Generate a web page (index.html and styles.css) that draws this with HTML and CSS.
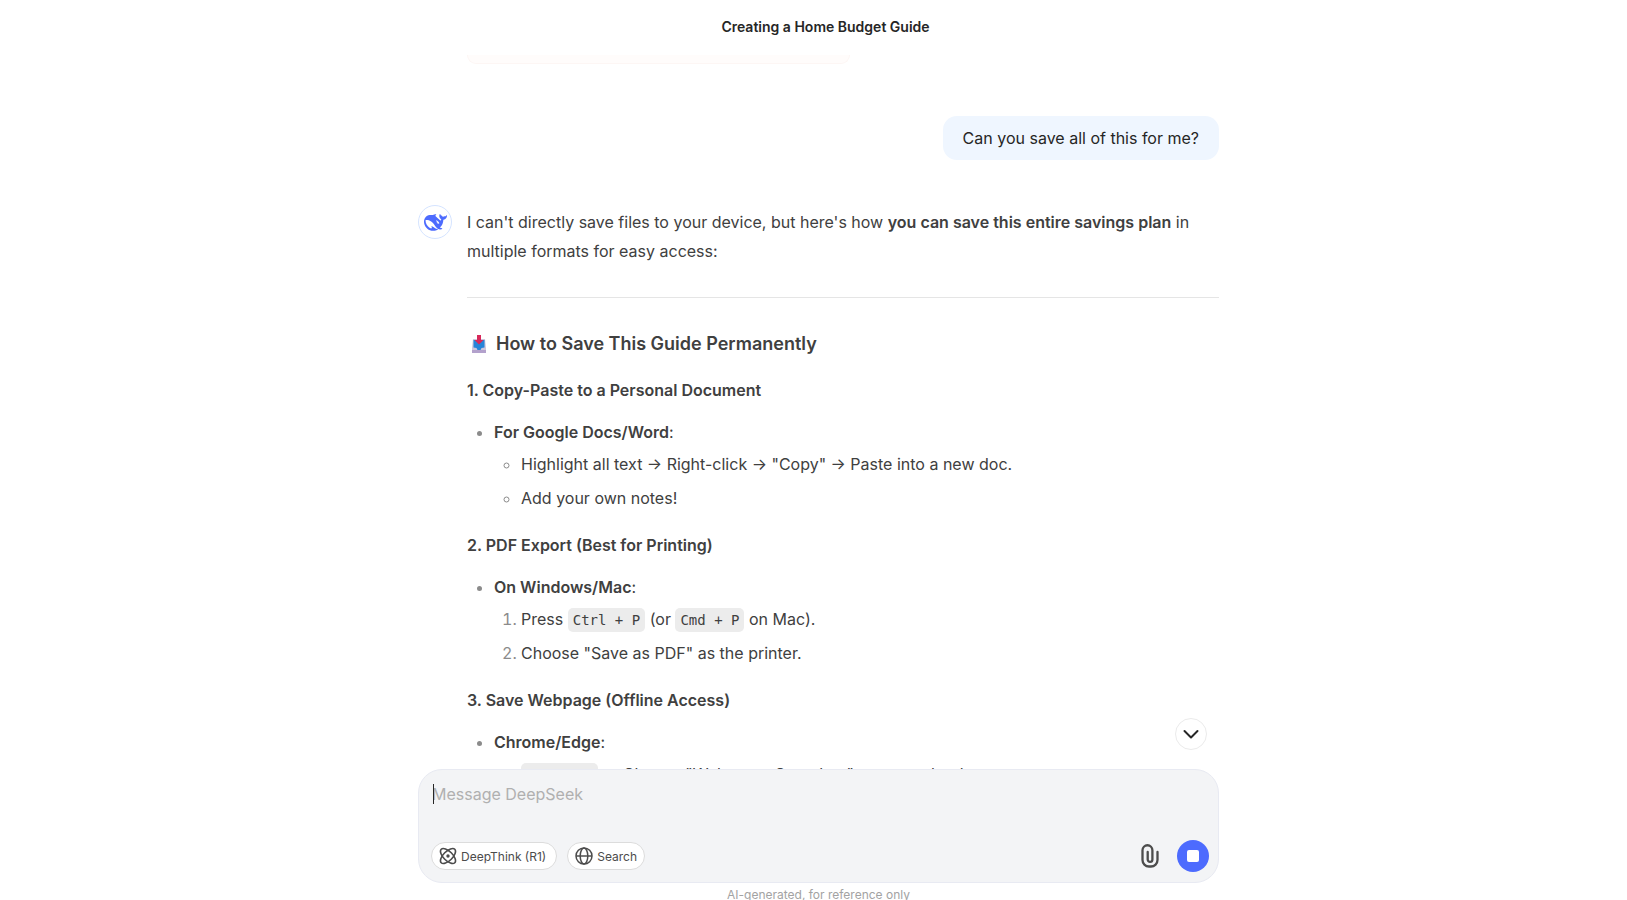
FILE: index.html
```html
<!DOCTYPE html>
<html lang="en">
<head>
  <meta charset="UTF-8" />
  <title>Creating a Home Budget Guide</title>
  <meta name="viewport" content="width=device-width, initial-scale=1.0" />
  <link rel="stylesheet" href="styles.css">
</head>
<body>
  <header class="header">
    <h1>Creating a Home Budget Guide</h1>
  </header>

  <main class="chat">
    <div class="messages">
      <div class="notice"></div>

      <div class="user-row">
        <div class="bubble">Can you save all of this for me?</div>
      </div>

      <div class="reply">
        <div class="avatar">
          <svg viewBox="0 0 24 24" width="23" height="23" fill="#4d6bfe" aria-hidden="true"><path d="M23.748 4.482c-.254-.124-.364.113-.512.234-.051.039-.094.09-.137.136-.372.397-.806.657-1.373.626-.829-.046-1.537.214-2.163.848-.133-.782-.575-1.248-1.247-1.548-.352-.156-.708-.311-.955-.65-.172-.241-.219-.51-.305-.774-.055-.16-.11-.323-.293-.35-.2-.031-.278.136-.356.276-.313.572-.434 1.202-.422 1.84.027 1.436.633 2.58 1.838 3.393.137.093.172.187.129.323-.082.28-.18.552-.266.833-.055.179-.137.217-.329.14a5.526 5.526 0 01-1.736-1.18c-.857-.828-1.631-1.742-2.597-2.458a11.365 11.365 0 00-.689-.471c-.985-.957.13-1.743.388-1.836.27-.098.093-.432-.779-.428-.872.004-1.67.295-2.687.684a3.055 3.055 0 01-.465.137 9.597 9.597 0 00-2.883-.102c-1.885.21-3.39 1.102-4.497 2.623C.082 8.606-.231 10.684.152 12.85c.403 2.284 1.569 4.175 3.36 5.653 1.858 1.533 3.997 2.284 6.438 2.14 1.482-.085 3.133-.284 4.994-1.86.47.234.962.327 1.78.397.63.059 1.236-.03 1.705-.128.735-.156.684-.837.419-.961-2.155-1.004-1.682-.595-2.113-.926 1.096-1.296 2.746-2.642 3.392-7.003.05-.347.007-.565 0-.845-.004-.17.035-.237.23-.256a4.173 4.173 0 001.545-.475c1.396-.763 1.96-2.015 2.093-3.517.02-.23-.004-.467-.247-.588zM11.581 18c-2.089-1.642-3.102-2.183-3.52-2.16-.392.024-.321.471-.235.763.09.288.207.486.371.739.114.167.192.416-.113.603-.673.416-1.842-.14-1.897-.167-1.361-.802-2.5-1.86-3.301-3.307-.774-1.393-1.224-2.887-1.298-4.482-.02-.386.093-.522.477-.592a4.696 4.696 0 011.529-.039c2.132.312 3.946 1.265 5.468 2.774.868.86 1.525 1.887 2.202 2.891.72 1.066 1.494 2.082 2.48 2.914.348.292.625.514.891.677-.802.09-2.14.11-3.054-.614zm1-6.44a.306.306 0 01.415-.287.302.302 0 01.2.288.306.306 0 01-.31.307.303.303 0 01-.304-.308zm3.11 1.596c-.2.081-.399.151-.59.16a1.245 1.245 0 01-.798-.254c-.274-.23-.47-.358-.552-.758a1.73 1.73 0 01.016-.588c.07-.327-.008-.537-.239-.727-.187-.156-.426-.199-.688-.199a.559.559 0 01-.254-.078c-.11-.054-.2-.19-.114-.358.028-.054.16-.186.192-.21.356-.202.767-.136 1.146.016.352.144.618.408 1.001.782.391.451.462.576.685.914.176.265.336.537.445.848.067.195-.019.354-.25.452z"/></svg>
        </div>
        <div class="markdown">
          <p>I can't directly save files to your device, but here's how <strong>you can save this entire savings plan</strong> in multiple formats for easy access:</p>
          <hr>
          <h3>
            <svg class="inbox" viewBox="0 0 16 18" width="16" height="18" aria-hidden="true">
              <path d="M2 4h12l1 9v5H1v-5z" fill="#cdc6dc"/>
              <path d="M1 15h14v3H1z" fill="#b3a1cc"/>
              <path d="M2.500 5h11v7.500l-3 .5-1 2h-3l-1-2-3-.5z" fill="#2684d8"/>
              <path d="M6 0h4v5h2.500L8 9.500 3.500 5H6z" fill="#d8285a"/>
            </svg>
            How to Save This Guide Permanently
          </h3>
          <h4>1. Copy-Paste to a Personal Document</h4>
          <ul>
            <li><strong>For Google Docs/Word</strong>:
              <ul>
                <li>Highlight all text → Right-click → "Copy" → Paste into a new doc.</li>
                <li>Add your own notes!</li>
              </ul>
            </li>
          </ul>
          <h4>2. PDF Export (Best for Printing)</h4>
          <ul>
            <li><strong>On Windows/Mac</strong>:
              <ol>
                <li>Press <code>Ctrl + P</code> (or <code>Cmd + P</code> on Mac).</li>
                <li>Choose "Save as PDF" as the printer.</li>
              </ol>
            </li>
          </ul>
          <h4>3. Save Webpage (Offline Access)</h4>
          <ul>
            <li><strong>Chrome/Edge</strong>:
              <ul>
                <li><code>Ctrl + S</code> → Choose "Webpage, Complete" → saves .html</li>
              </ul>
            </li>
          </ul>
        </div>
      </div>
    </div>
    <button class="scroll-down" type="button" aria-label="Scroll to bottom">
      <svg viewBox="0 0 16 16" width="16" height="16" fill="none" stroke="#262626" stroke-width="2" stroke-linecap="round" stroke-linejoin="round"><path d="M1.500 5 8 11.500 14.500 5"/></svg>
    </button>
  </main>

  <footer class="footer">
    <form class="composer">
      <div class="input-wrap">
        <textarea id="message" rows="2" placeholder="Message DeepSeek" aria-label="Message DeepSeek"></textarea>
        <span class="caret"></span>
      </div>
      <div class="toolbar">
        <button class="chip" type="button">
          <svg viewBox="0 0 18 18" width="18" height="18" fill="none" stroke="#4c4c4c" stroke-width="1.600">
            <ellipse cx="9" cy="9" rx="9.600" ry="4.600" transform="rotate(45 9 9)"/>
            <ellipse cx="9" cy="9" rx="9.600" ry="4.600" transform="rotate(-45 9 9)"/>
            <circle cx="9" cy="9" r="1.700" fill="#4c4c4c" stroke="none"/>
          </svg>
          DeepThink (R1)
        </button>
        <button class="chip" type="button">
          <svg viewBox="0 0 18 18" width="18" height="18" fill="none" stroke="#4c4c4c" stroke-width="1.500">
            <circle cx="9" cy="9" r="8"/>
            <ellipse cx="9" cy="9" rx="3.800" ry="8"/>
            <path d="M1 9h16"/>
          </svg>
          Search
        </button>
        <button class="attach" type="button" aria-label="Attach file">
          <svg viewBox="0 0 18 24" width="18" height="24" fill="none" stroke="#4c4c4c" stroke-width="2.300" stroke-linecap="round"><path d="M16.500 8v8a6.500 6.500 0 0 1-6.500 6.500H8A6.500 6.500 0 0 1 1.500 16V6.200a4.900 4.900 0 0 1 9.900 0v9.300a2.300 2.300 0 0 1-4.700 0V8"/></svg>
        </button>
        <button class="stop" type="button" aria-label="Stop"><span></span></button>
      </div>
    </form>
    <p class="disclaimer">AI-generated, for reference only</p>
  </footer>
</body>
</html>
```
FILE: styles.css
```css
* {
  box-sizing: border-box;
}
body {
  font-family: Inter, sans-serif;
  font-size: 16px;
  line-height: 29px;
  color: #404040;
  background: #fff;
  margin: 0;
  height: 100vh;
  display: flex;
  flex-direction: column;
  overflow: hidden;
}
button {
  font: inherit;
  border: none;
  padding: 0;
  cursor: pointer;
  display: flex;
  align-items: center;
  justify-content: center;
}
svg {
  display: block;
  flex: none;
  overflow: visible;
}
.header {
  flex: none;
  height: 55px;
  padding: 0 0 2px 24px;
  display: flex;
  align-items: center;
  justify-content: center;
}
.header h1 {
  margin: 0;
  font-size: 14px;
  font-weight: 600;
  color: #262626;
}

/* messages */
.chat {
  flex: 1;
  min-height: 0;
  position: relative;
  width: 100%;
  max-width: 811px;
  margin: 0 auto;
  padding-left: 10px;
}
.messages {
  height: 100%;
  overflow: hidden;
}
.notice {
  height: 9px;
  width: 383px;
  margin-left: 49px;
  background: #fffcfb;
  border: 1px solid #fdf6f4;
  border-top: none;
  border-radius: 0 0 12px 12px;
}
.user-row {
  display: flex;
  justify-content: flex-end;
  margin: 52px 0 44px;
}
.bubble {
  background: #eff6ff;
  color: #262626;
  border-radius: 14px;
  padding: 8px 20px;
  line-height: 28px;
}
.reply {
  display: flex;
  gap: 15px;
}
.avatar {
  flex: none;
  width: 34px;
  height: 34px;
  margin-top: 1px;
  border: 1px solid #d5e4ff;
  border-radius: 50%;
  display: flex;
  align-items: center;
  justify-content: center;
}
.markdown {
  flex: 1;
  padding-top: 4px;
}
.markdown p {
  margin: 0;
}
.markdown hr {
  border: none;
  border-top: 1px solid #e5e5e5;
  margin: 31px 0 32px;
}
.markdown strong {
  font-weight: 600;
}
.markdown h3 {
  display: flex;
  align-items: center;
  gap: 9px;
  margin: 0 0 20px;
  padding-left: 4px;
  font-size: 18px;
  font-weight: 600;
  line-height: 28px;
}
.markdown h4 {
  margin: 20px 0 16px;
  font-size: 16px;
  font-weight: 600;
  line-height: 24px;
}
.markdown ul,
.markdown ol {
  margin: 0;
  padding-left: 27px;
}
.markdown li > ul,
.markdown li > ol {
  margin-top: 3px;
}
.markdown li + li {
  margin-top: 5px;
}
.markdown li::marker {
  color: #8b8b8b;
}
.markdown code {
  font-family: "DejaVu Sans Mono", monospace;
  font-size: 14px;
  line-height: 16px;
  background: #ececec;
  border-radius: 5px;
  padding: 4px 5px;
}
.scroll-down {
  position: absolute;
  right: 12px;
  bottom: 19px;
  width: 32px;
  height: 32px;
  background: #fff;
  border: 1px solid #ebebeb;
  border-radius: 50%;
}

/* input */
.footer {
  flex: none;
  width: 100%;
  max-width: 811px;
  margin: 0 auto;
  padding-left: 10px;
}
.composer {
  background: #f3f4f6;
  border: 1px solid #e8eaf2;
  border-radius: 24px;
  padding: 10px 9px 10px 12px;
}
.input-wrap {
  position: relative;
  padding-left: 1px;
}
textarea {
  display: block;
  width: 100%;
  height: 56px;
  padding: 0;
  border: none;
  outline: none;
  resize: none;
  background: none;
  font: inherit;
  line-height: 28px;
  color: #262626;
}
textarea::placeholder {
  color: #b0b0b0;
}
.caret {
  position: absolute;
  left: 2px;
  top: 4px;
  width: 1px;
  height: 20px;
  background: #262626;
}
.toolbar {
  display: flex;
  align-items: center;
  gap: 10px;
  margin-top: 4px;
}
.chip {
  gap: 4px;
  height: 28px;
  padding: 0 7px;
  background: #fff;
  border: 1px solid #dcdcdc;
  border-radius: 14px;
  font-size: 12px;
  color: #4c4c4c;
}
.chip:first-child {
  padding-right: 10px;
}
.attach {
  margin-left: auto;
  margin-right: 8px;
  background: none;
}
.stop {
  width: 32px;
  height: 32px;
  background: #4d6bfe;
  border-radius: 50%;
}
.stop span {
  width: 12px;
  height: 12px;
  background: #fff;
  border-radius: 2px;
}
.disclaimer {
  margin: 4px 0 0;
  height: 13px;
  font-size: 12px;
  line-height: 16px;
  text-align: center;
  color: #a3a3a3;
}
```
